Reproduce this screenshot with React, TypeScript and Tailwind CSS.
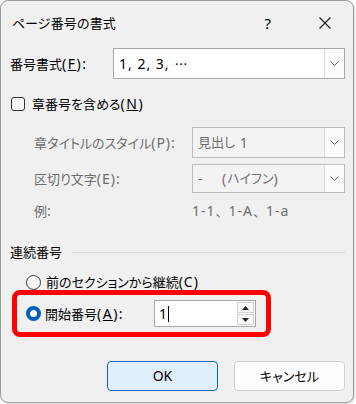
import React from 'react';

const font = {
  fontFamily: '"Noto Sans", "Noto Sans CJK JP", sans-serif',
  fontFeatureSettings: '"palt"',
};

const noPalt = { fontFeatureSettings: 'normal' };

// latin parts are a little wider in the original UI font
const L: React.FC<{ children: React.ReactNode; wide?: boolean }> = ({ children, wide }) => (
  <span className={wide ? 'text-[14px] tracking-[1.5px]' : 'text-[14px] tracking-[1px]'}>{children}</span>
);

const Comma = () => <span style={noPalt}>、</span>;

const Chevron: React.FC<{ color?: string }> = ({ color = '#606060' }) => (
  <svg width="9" height="5" viewBox="0 0 9 5" fill="none">
    <path d="M0.5 0.5 L4.5 4.5 L8.5 0.5" stroke={color} strokeWidth="1" />
  </svg>
);

const Combo: React.FC<{ children: React.ReactNode; disabled?: boolean; className?: string }> = ({ children, disabled, className }) => (
  <div
    className={
      'flex items-stretch border ' +
      (disabled ? 'border-[#bcbcbc] bg-[#f3f3f3] text-[#6d6d6d]' : 'border-[#a8a8a8] bg-white text-black') +
      ' ' +
      (className ?? '')
    }
  >
    <div className="flex-1 flex items-center pl-[5px] text-[13px]">{children}</div>
    <div className="w-[20px] flex items-center justify-center bg-[#fcfcfc] border-l border-[#dcdcdc]">
      <Chevron />
    </div>
  </div>
);

const App: React.FC = () => {
  return (
    <div className="w-[356px] h-[404px] bg-white" style={font}>
      <div className="w-[354px] h-[403px] border border-[#9c9c9c] rounded-[8px] bg-[#f0f0f0] flex flex-col text-black text-[13px] leading-none shadow-[1px_1px_2px_rgba(0,0,0,0.15)]">
        {/* title bar */}
        <div className="h-[44px] flex items-center pl-[11px]">
          <span className="text-[13px]" style={noPalt}>ページ番号の書式</span>
          <div className="flex-1" />
          <span className="text-[15px] mr-[48px]">?</span>
          <svg width="12" height="12" viewBox="0 0 12 12" className="mr-[22px]">
            <path d="M0.5 0.5 L11.5 11.5 M11.5 0.5 L0.5 11.5" stroke="#1a1a1a" strokeWidth="1.1" />
          </svg>
        </div>

        {/* number format */}
        <div className="mt-[3px] h-[31px] flex items-center pl-[9px]">
          <span className="w-[103px]">
            番号書式<L wide>(<span className="underline underline-offset-1">F</span>):</L>
          </span>
          <Combo className="w-[232px] h-[31px]">
            <L>1, 2, 3,</L>
            <span className="ml-[5px] text-[13px]" style={{ fontFamily: '"Noto Sans CJK JP", sans-serif' }}>…</span>
          </Combo>
        </div>

        {/* include chapter number */}
        <div className="mt-[18px] h-[14px] flex items-center pl-[10px]">
          <div className="w-[14px] h-[14px] border border-[#333] rounded-[3px] bg-[#f7f7f7]" />
          <span className="ml-[7px]">
            章番号を含める<L wide>(<span className="underline underline-offset-1">N</span>)</L>
          </span>
        </div>

        <div className="mt-[16px] h-[31px] flex items-center pl-[33px] text-[#6d6d6d]">
          <span className="w-[158px]">章タイトルのスタイル<L>(P):</L></span>
          <Combo disabled className="w-[153px] h-[31px]">見出し <L>&nbsp;1</L></Combo>
        </div>

        <div className="mt-[6px] h-[29px] flex items-center pl-[33px] text-[#6d6d6d]">
          <span className="w-[158px]">区切り文字<L>(E):</L></span>
          <Combo disabled className="w-[153px] h-[29px]"><L>-&nbsp;&nbsp;&nbsp;&nbsp;(</L>ハイフン<L>)</L></Combo>
        </div>

        <div className="mt-[10px] h-[16px] flex items-center pl-[33px] text-[#6d6d6d]">
          <span className="w-[158px]"><span>例</span><L>:</L></span>
          <span><L>1-1</L><Comma /><L>1-A</L><Comma /><L>1-a</L></span>
        </div>

        {/* page numbering group */}
        <div className="mt-[25px] h-[16px] flex items-center pl-[9px] pr-[8px]">
          <span>連続番号</span>
          <div className="flex-1 ml-[10px] h-px bg-[#d8d8d8]" />
        </div>

        <div className="mt-[14px] h-[16px] flex items-center pl-[25px]">
          <div className="w-[15px] h-[15px] rounded-full border border-[#333] bg-[#f7f7f7]" />
          <span className="ml-[5px]">前のセクションから継続<L>(C)</L></span>
        </div>

        <div className="ml-[11px] w-[259px] h-[47px] border-[5px] border-[#ff0000] rounded-[8px] flex items-center pl-[9px]">
          <div className="w-[15px] h-[15px] rounded-full bg-[#005fb8] flex items-center justify-center">
            <div className="w-[7px] h-[7px] rounded-full bg-white" />
          </div>
          <span className="ml-[4px] w-[109px]">
            開始番号<L wide>(<span className="underline underline-offset-1">A</span>):</L>
          </span>
          <div className="w-[102px] h-[27px] border border-[#a8a8a8] bg-white flex items-stretch">
            <div className="flex-1 flex items-center pl-[4px]">
              <span className="text-[14px]">1</span>
              <div className="w-px h-[16px] bg-black ml-[1px]" />
            </div>
            <div className="w-[19px] flex flex-col p-[1px] gap-px">
              <div className="flex-1 border border-[#d0d0d0] bg-[#fafafa] flex items-center justify-center">
                <svg width="7" height="4" viewBox="0 0 7 4"><path d="M0 4 L3.5 0 L7 4 Z" fill="#222" /></svg>
              </div>
              <div className="flex-1 border border-[#d0d0d0] bg-[#fafafa] flex items-center justify-center">
                <svg width="7" height="4" viewBox="0 0 7 4"><path d="M0 0 L3.5 4 L7 0 Z" fill="#222" /></svg>
              </div>
            </div>
          </div>
        </div>

        {/* buttons */}
        <div className="mt-[24px] flex pl-[106px] gap-[16px]">
          <button className="w-[111px] h-[30px] rounded-[4px] border border-[#0067c0] bg-[#e0eef9] text-[14px]">OK</button>
          <button className="w-[111px] h-[30px] rounded-[4px] border border-[#d0d0d0] bg-[#fdfdfd] text-[13px]">キャンセル</button>
        </div>
      </div>
    </div>
  );
};

export default App;
